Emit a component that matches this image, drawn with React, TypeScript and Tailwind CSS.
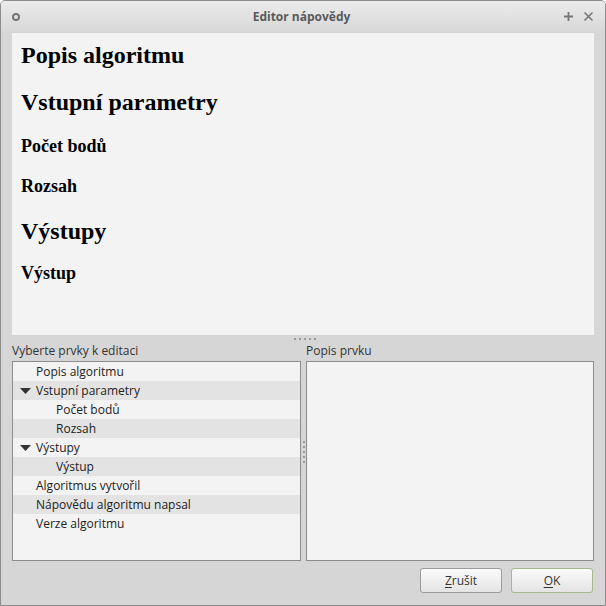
import { FC } from "react";

const headings: Array<{ text: string; cls: string }> = [
  { text: "Popis algoritmu", cls: "text-[24px] leading-[44px]" },
  { text: "Vstupní parametry", cls: "text-[24px] leading-[50px]" },
  { text: "Počet bodů", cls: "text-[18px] leading-[38px]" },
  { text: "Rozsah", cls: "text-[18px] leading-[42px]" },
  { text: "Výstupy", cls: "text-[24px] leading-[48px]" },
  { text: "Výstup", cls: "text-[18px] leading-[36px]" },
];

const items: Array<{ title: string; level: number; arrow?: boolean }> = [
  { title: "Popis algoritmu", level: 0 },
  { title: "Vstupní parametry", level: 0, arrow: true },
  { title: "Počet bodů", level: 1 },
  { title: "Rozsah", level: 1 },
  { title: "Výstupy", level: 0, arrow: true },
  { title: "Výstup", level: 1 },
  { title: "Algoritmus vytvořil", level: 0 },
  { title: "Nápovědu algoritmu napsal", level: 0 },
  { title: "Verze algoritmu", level: 0 },
];

const Button: FC<{ first: string; rest: string; focused?: boolean }> = ({ first, rest, focused }) => (
  <div
    className={`w-[82px] h-[25px] rounded-[3px] border flex items-center justify-center text-[12px] text-[#333] bg-gradient-to-b from-[#fbfbfb] to-[#e4e4e4] ${
      focused ? "border-[#a3b98a]" : "border-[#9a9a9a]"
    }`}
  >
    <span>
      <span className="underline underline-offset-2">{first}</span>
      {rest}
    </span>
  </div>
);

const App: FC = () => {
  return (
    <div
      className="w-[606px] h-[606px] bg-[#d6d6d6] border border-[#8c8c8c] rounded-t-[5px] flex flex-col overflow-hidden"
      style={{ fontFamily: '"Open Sans", "Noto Sans", sans-serif' }}
    >
      {/* title bar */}
      <div className="h-[31px] flex items-center px-[11px] bg-gradient-to-b from-[#ebebeb] to-[#d8d8d8] text-[#5a5a5a]">
        <div className="w-[8px] h-[8px] rounded-full border-2 border-[#777]" />
        <div className="flex-1 text-center text-[12px] font-bold pl-[20px]">Editor nápovědy</div>
        <div className="flex items-center gap-[9px] text-[#777]">
          <svg width="11" height="11" viewBox="0 0 11 11">
            <path d="M5.5 1v9M1 5.5h9" stroke="#777" strokeWidth="1.8" />
          </svg>
          <svg width="11" height="11" viewBox="0 0 11 11">
            <path d="M1.5 1.5l8 8M9.5 1.5l-8 8" stroke="#777" strokeWidth="1.6" />
          </svg>
        </div>
      </div>

      <div className="flex-1 flex flex-col px-[11px] pt-[1px]">
        {/* text browser */}
        <div
          className="h-[302px] bg-[#f3f3f3] pl-[9px] text-black font-bold"
          style={{ fontFamily: '"Liberation Serif", serif' }}
        >
          {headings.map((h) => (
            <div key={h.text} className={h.cls}>
              {h.text}
            </div>
          ))}
        </div>

        {/* horizontal splitter */}
        <div className="h-[8px] flex justify-center items-center gap-[3px] pl-[4px]">
          {[0, 1, 2, 3, 4].map((i) => (
            <div key={i} className="w-[2px] h-[2px] bg-[#9a9a9a]" />
          ))}
        </div>

        <div className="flex h-[218px]">
          <div className="w-[289px] flex flex-col">
            <div className="h-[18px] text-[12px] text-[#333] leading-[16px]">Vyberte prvky k editaci</div>
            <div className="flex-1 border border-[#8c8c8c] bg-[#f3f3f3] text-[12px] text-[#222]">
              {items.map((it, i) => (
                <div
                  key={it.title}
                  className={`h-[19px] flex items-center ${i % 2 === 1 ? "bg-[#e3e3e3]" : ""} ${
                    it.level === 1 ? "pl-[43px]" : it.arrow ? "pl-[7px]" : "pl-[23px]"
                  }`}
                >
                  {it.arrow && (
                    <svg width="11" height="6" viewBox="0 0 11 6" className="mr-[5px]">
                      <path d="M0 0h11L5.5 6z" fill="#333" />
                    </svg>
                  )}
                  {it.title}
                </div>
              ))}
            </div>
          </div>

          {/* vertical splitter */}
          <div className="w-[5px] flex flex-col justify-center items-center gap-[3px]">
            {[0, 1, 2, 3, 4].map((i) => (
              <div key={i} className="w-[2px] h-[2px] bg-[#9a9a9a]" />
            ))}
          </div>

          <div className="flex-1 flex flex-col">
            <div className="h-[18px] text-[12px] text-[#333] leading-[16px]">Popis prvku</div>
            <div className="flex-1 border border-[#8c8c8c] bg-[#f3f3f3]" />
          </div>
        </div>

        <div className="flex justify-end gap-[9px] pt-[7px] pr-[1px]">
          <Button first="Z" rest="rušit" />
          <Button first="O" rest="K" focused />
        </div>
      </div>
    </div>
  );
};

export default App;
